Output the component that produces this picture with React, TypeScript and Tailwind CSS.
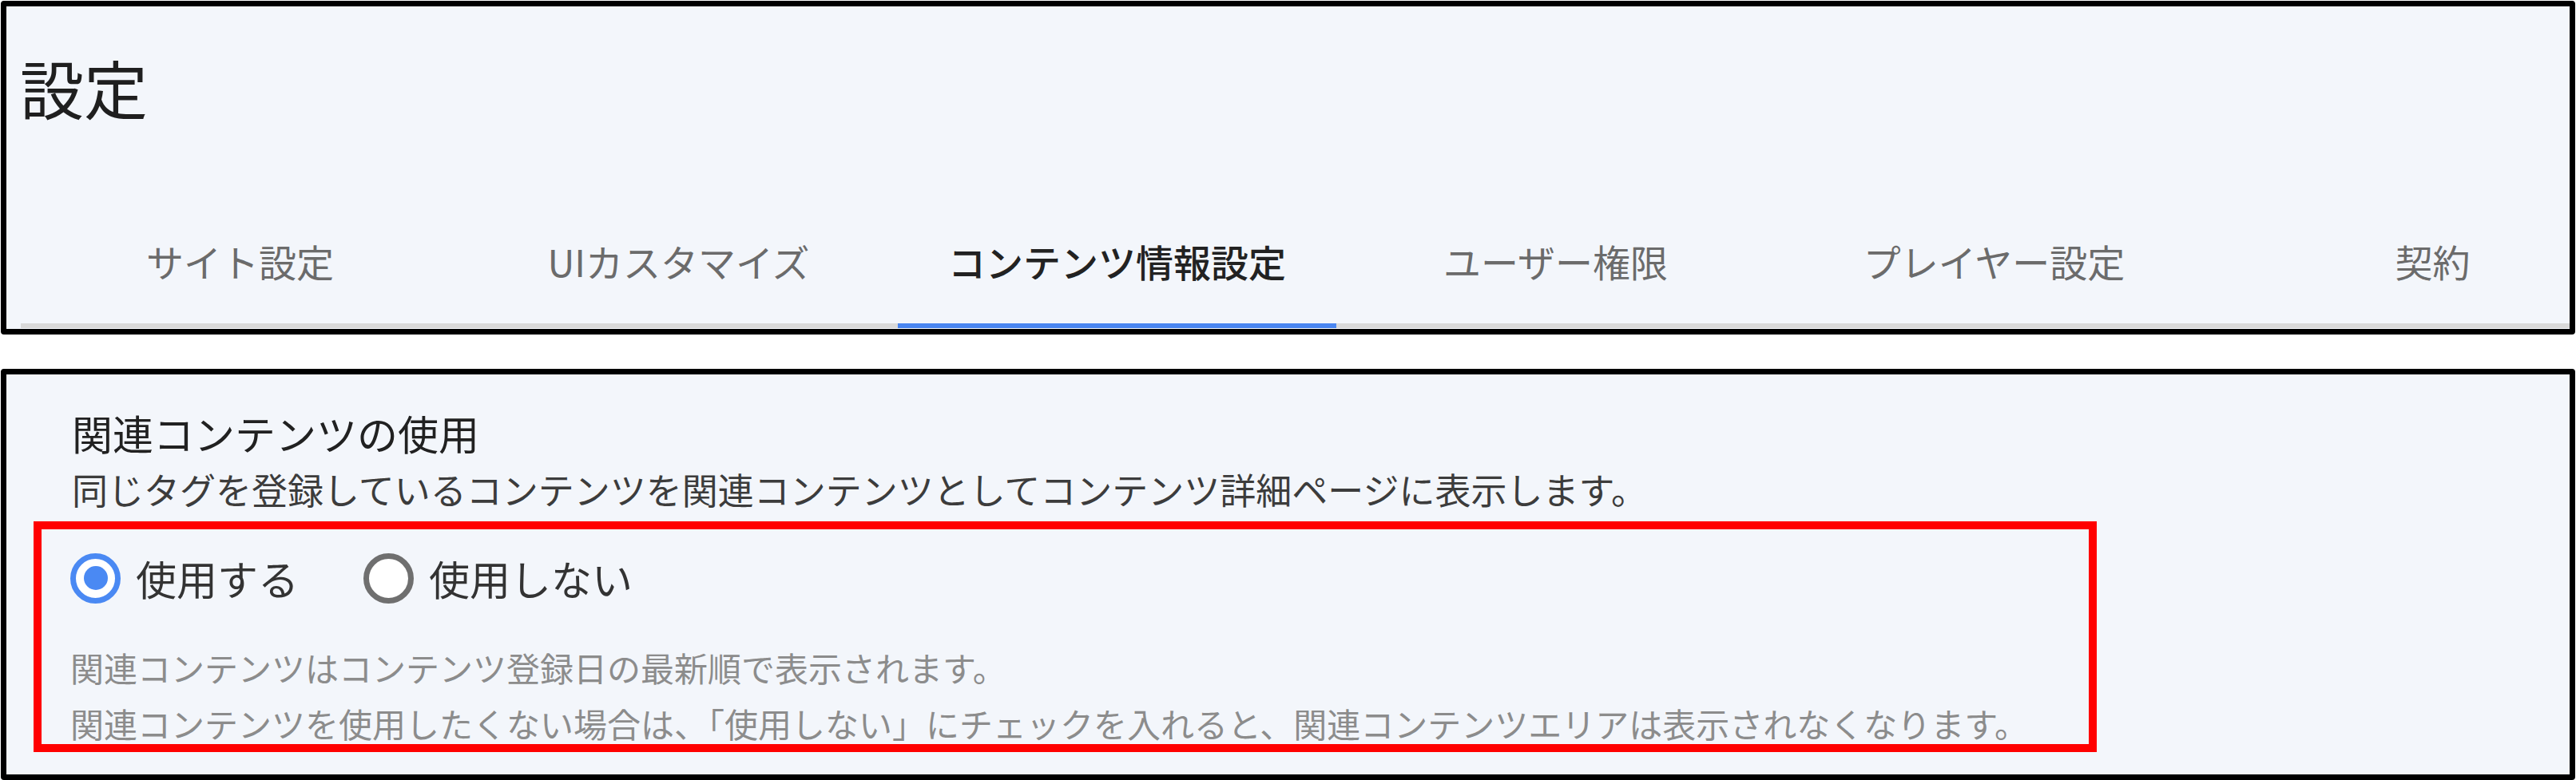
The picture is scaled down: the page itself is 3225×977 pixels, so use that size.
import React, { useState } from 'react';

const tabs = ['サイト設定', 'UIカスタマイズ', 'コンテンツ情報設定', 'ユーザー権限', 'プレイヤー設定', '契約'];

function Radio({ checked, label, onClick }: { checked: boolean; label: string; onClick: () => void }) {
    return (
        <label className="flex items-center mr-[81px] cursor-pointer" onClick={onClick}>
            <span
                className={`flex items-center justify-center w-[63px] h-[63px] rounded-full border-[7px] bg-white ${
                    checked ? 'border-[#4a89f3]' : 'border-[#6f6f6f]'
                }`}
            >
                {checked && <span className="w-[30px] h-[30px] rounded-full bg-[#4a89f3]"></span>}
            </span>
            <span className="ml-[19px] text-[51px] leading-none text-[#333333]">{label}</span>
        </label>
    );
}

export default function App() {
    const [activeTab, setActiveTab] = useState(2);
    const [useRelated, setUseRelated] = useState(true);

    return (
        <div className="w-[3225px] h-[977px] bg-white overflow-hidden font-['Noto_Sans_CJK_JP','Noto_Sans',sans-serif]">
            {/* header + tabs */}
            <div className="ml-[1px] mt-[1px] w-[3223px] h-[418px] border-[7px] border-black rounded-[4px] bg-[#f3f6fb] flex flex-col">
                <h1 className="pl-[17px] pt-[60px] text-[80px] leading-none font-normal text-[#1f1f1f]">設定</h1>
                <div className="ml-[18px] mt-[100px] flex overflow-hidden">
                    {tabs.map((tab, i) => (
                        <button
                            key={tab}
                            onClick={() => setActiveTab(i)}
                            className={`shrink-0 w-[549px] pt-[55px] pb-[55px] text-center text-[47px] leading-none border-b-[6px] ${
                                i === activeTab
                                    ? 'border-[#4a86f0] text-[#222222] font-medium'
                                    : 'border-[#d9d9d9] text-[#6b6b6b]'
                            }`}
                        >
                            {tab}
                        </button>
                    ))}
                </div>
            </div>

            {/* related contents setting */}
            <div className="ml-[1px] mt-[43px] w-[3223px] h-[515px] border-[7px] border-black rounded-[4px] bg-[#f3f6fb] flex flex-col">
                <h2 className="ml-[82px] mt-[48px] text-[51px] leading-none font-normal text-[#212121]">関連コンテンツの使用</h2>
                <p className="ml-[82px] mt-[22px] text-[45px] leading-none text-[#3c3c3c]">
                    同じタグを登録しているコンテンツを関連コンテンツとしてコンテンツ詳細ページに表示します。
                </p>
                <div className="ml-[34px] mt-[18px] w-[2583px] border-[10px] border-[#ff0000] pt-[30px] pl-[36px] pb-[5px]">
                    <div className="flex items-center h-[62px]">
                        <Radio checked={useRelated} label="使用する" onClick={() => setUseRelated(true)} />
                        <Radio checked={!useRelated} label="使用しない" onClick={() => setUseRelated(false)} />
                    </div>
                    <p className="mt-[60px] text-[42px] leading-none text-[#8c8c8c]">
                        関連コンテンツはコンテンツ登録日の最新順で表示されます。
                    </p>
                    <p className="mt-[28px] text-[42px] leading-none text-[#8c8c8c]">
                        関連コンテンツを使用したくない場合は、「使用しない」にチェックを入れると、関連コンテンツエリアは表示されなくなります。
                    </p>
                </div>
            </div>
        </div>
    );
}
